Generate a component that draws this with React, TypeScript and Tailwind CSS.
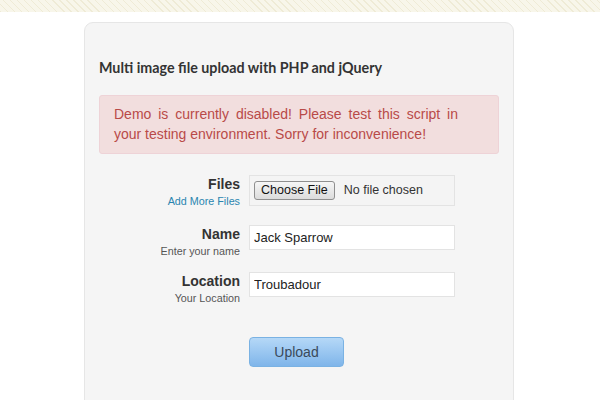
import React from 'react';

const fields = [
  { id: 'name', label: 'Name', hint: 'Enter your name', value: 'Jack Sparrow' },
  { id: 'location', label: 'Location', hint: 'Your Location', value: 'Troubadour' },
];

export default function App() {
  return (
    <div className="w-[600px] h-[400px] overflow-hidden bg-white font-['Liberation_Sans',Arial,sans-serif]">
      {/* patterned header strip */}
      <div className="h-[12px] bg-[#f8f6ea] bg-[repeating-linear-gradient(45deg,#efebd6_0px,#efebd6_1px,transparent_1px,transparent_5px)]" />

      <div className="ml-[84px] mt-[10px] w-[430px] h-[420px] rounded-[9px] border border-[#e6e6e6] bg-[#f5f5f5] px-[14px] pt-[35px]">
        <h1 className="font-['Lato',sans-serif] font-bold text-[14.3px] leading-[20px] text-[#333]">
          Multi image file upload with PHP and jQuery
        </h1>

        {/* alert */}
        <div className="mt-[17px] w-[400px] rounded-[3px] border border-[#eed3d7] bg-[#f2dede] pl-[14px] pr-[40px] pt-[8px] pb-[9px] text-[14px] leading-[20px] text-[#b94a48] text-justify">
          Demo is currently disabled! Please test this script in your testing environment. Sorry for inconvenience!
        </div>

        {/* form */}
        <div className="mt-[21px] flex flex-col">
          <div className="flex">
            <div className="w-[141px] text-right">
              <div className="text-[14px] font-bold leading-[18px] text-[#333]">Files</div>
              <a className="block text-[10.75px] leading-[16px] text-[#2a85b0]">Add More Files</a>
            </div>
            <div className="ml-[9px] w-[206px] h-[31px] border border-[#e3e3e3] bg-[#f4f4f4] flex items-center pl-[4px]">
              <button className="h-[19px] px-[6px] rounded-[3px] border border-[#8f8f8f] bg-gradient-to-b from-[#f6f6f6] to-[#dcdcdc] text-[12.5px] leading-[17px] text-[#111]">
                Choose File
              </button>
              <span className="ml-[9px] text-[12.5px] text-[#333]">No file chosen</span>
            </div>
          </div>

          {fields.map((f, i) => (
            <div key={f.id} className={i === 0 ? 'flex mt-[16px]' : 'flex mt-[14px]'}>
              <div className="w-[141px] text-right">
                <div className="text-[14px] font-bold leading-[18px] text-[#333]">{f.label}</div>
                <div className="mt-px text-[10.75px] leading-[14px] text-[#555]">{f.hint}</div>
              </div>
              <input
                readOnly
                value={f.value}
                className="ml-[9px] w-[206px] h-[25px] border border-[#e3e3e3] bg-white px-[4px] text-[13px] text-[#222] outline-none"
              />
            </div>
          ))}

          <div className="mt-[32px] pl-[150px]">
            <button className="w-[95px] h-[30px] rounded-[4px] border border-[#7ab2e3] bg-gradient-to-b from-[#b5d8f7] to-[#7fb5ea] text-[14px] text-[#3a4a5a]">
              Upload
            </button>
          </div>
        </div>
      </div>
    </div>
  );
}
